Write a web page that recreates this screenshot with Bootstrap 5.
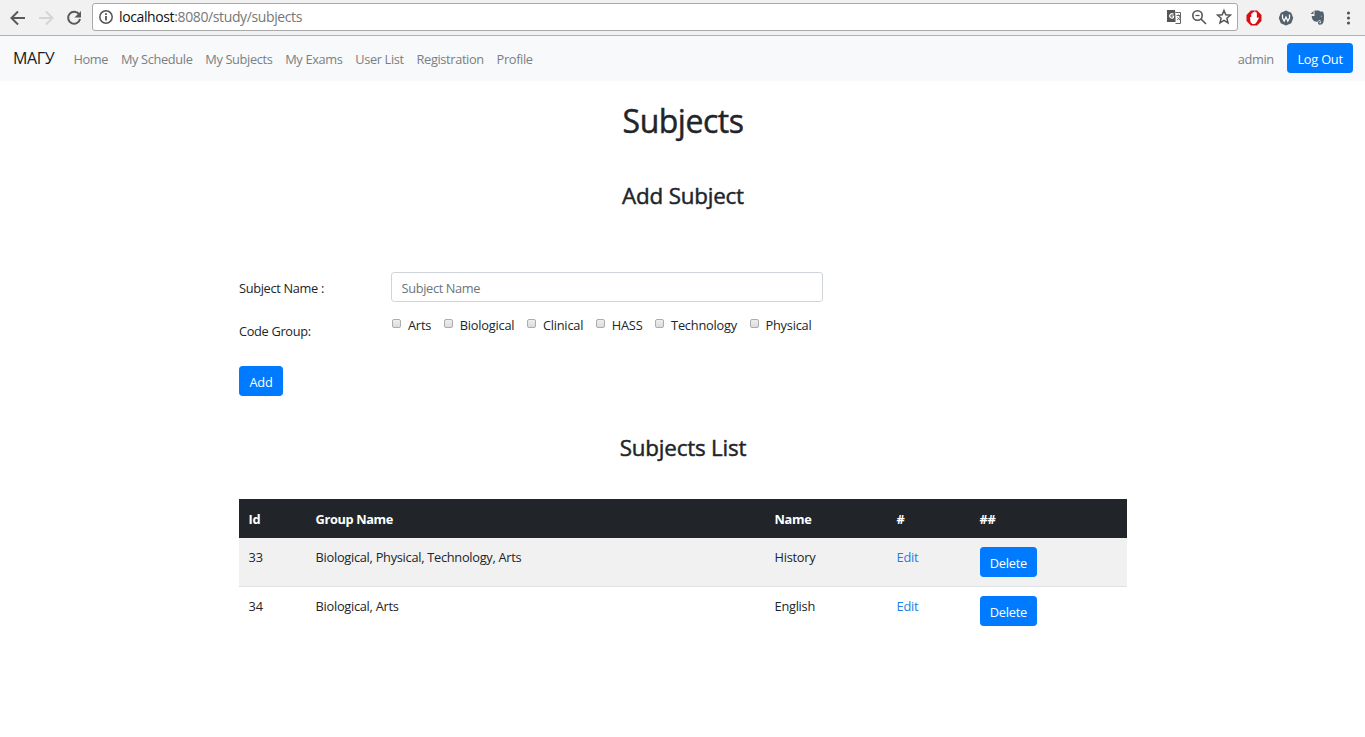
<!DOCTYPE html>
<html lang="en">
<head>
<meta charset="utf-8">
<meta name="viewport" content="width=device-width, initial-scale=1">
<title>Subjects</title>
<link rel="stylesheet" href="https://cdn.jsdelivr.net/npm/bootstrap@5.3.0/dist/css/bootstrap.min.css">
<style>
:root{font-size:12.8px}
body{font-family:"Open Sans","Noto Sans",sans-serif;font-size:12.8px;line-height:19.2px;color:#212529;letter-spacing:-.33px;background:#fff;overflow:hidden}
.browser-bar{height:36px;background:#f1f1f1;border-bottom:1px solid #b3b3b3}
.browser-bar svg{flex:none;display:block}
.address{width:1146px;height:28px;margin:0 7px 2px 10px;background:#fff;border:1px solid #a9a9a9;border-radius:3px;font-size:14px;letter-spacing:-.38px;color:#777;padding:0 4px 0 5px}
.address .url{margin-left:5px;padding-top:1px}
.address b{font-weight:400;color:#111}
.site-nav{height:45px;background:#f7f9fb;padding:0 12px 0 13px}
.site-nav .navbar-brand{font-size:16px;padding:0;margin:0 6px 0 0;width:48px;color:#1b1b1b;letter-spacing:-.35px}
.site-nav .nav-link{padding:2px 6.4px 0;color:#7c7f81;letter-spacing:-.36px}
.site-nav .btn{margin:0 0 2px 7px}
.btn-primary{--bs-btn-bg:#007bff;--bs-btn-border-color:#007bff;--bs-btn-border-radius:3.2px;--bs-btn-padding-x:9.200px;--bs-btn-font-size:12.8px;padding-top:5.400px;padding-bottom:3.400px;height:30px;line-height:21px;letter-spacing:-.23px}
h1,h3{font-weight:500;-webkit-text-stroke:.45px #212529}
h1{font-size:32px;line-height:38px;margin:21px 0 0;letter-spacing:-.5px;padding-left:1px}
h3{font-size:22.4px;line-height:27px;letter-spacing:-.2px;padding-left:1px}
.add-title{margin:42px 0 0}
.list-title{margin:38px 0}
.page-body{width:888px;margin:0 auto 0 239px}
.add-form{padding-top:63px}
.add-form .btn{min-width:44px}
.form-label-col{width:152px;padding-top:7px}
.group-row{height:64px;padding-top:14px}
.group-row .form-label-col{padding-top:6px}
.form-control{width:432px;height:30px;border-color:#ced4da;border-radius:3.2px;padding:2px 9.6px 0;font-size:12.8px;letter-spacing:-.36px}
.form-control::placeholder{color:#6c757d}
.checks{gap:12.600px;padding-left:1px;letter-spacing:-.22px}
.group-check{appearance:none;width:9px;height:9px;margin:0 7px 4px 0;border:1px solid #acacac;border-radius:2px;background:linear-gradient(#eee,#dcdcdc)}
.subject-table{table-layout:fixed;width:888px;margin:0;color:#212529;letter-spacing:-.28px}
.subject-table>:not(caption)>*>*{padding:9.6px;border:0;vertical-align:top}
.subject-table>thead>tr>th{background:#212529;color:#fff;height:39px;font-weight:700;padding-top:11px;padding-bottom:8px;letter-spacing:-.38px}
.subject-table>tbody>tr>td{height:49px;padding-top:10px;padding-bottom:0}
.subject-table>tbody>tr>td.act{padding-top:9px}
.subject-table tbody tr:first-child td{background:#f1f1f2;box-shadow:inset 0 -1px #dee2e6}
.subject-table a{color:#1a7ee6;text-decoration:none}
</style>
</head>
<body>
<div class="browser-bar d-flex align-items-center">
  <svg width="82" height="34" viewBox="0 0 82 34" fill="none" stroke="#5a5a5a" stroke-width="2">
    <path d="M25 17H12M18 10.5 11.500 17 18 23.500"/>
    <path stroke="#d5d5d5" d="M39 17h13M46 10.500 52.500 17 46 23.500"/>
    <path d="M79 13.200A6 6 0 1 0 80 18"/><path fill="#5a5a5a" stroke="none" d="M81 10v6.500h-6.500z"/>
  </svg>
  <div class="address d-flex align-items-center">
    <svg width="16" height="16" viewBox="0 0 16 16" fill="none" stroke="#555" stroke-width="1.500"><circle cx="8" cy="8" r="6.200"/><path stroke-width="1.800" d="M8 7v4.500M8 4.300v1.800"/></svg>
    <span class="url me-auto"><b>localhost</b>:8080/study/subjects</span>
    <svg width="66" height="18" viewBox="0 0 66 18">
      <path fill="#555" d="M0 2h8l1.500 12H0z"/><path fill="#fff" stroke="#666" d="M8.500 4.500h5v11h-5"/>
      <path fill="none" stroke="#fff" stroke-width="1.200" d="M6.500 6.300A2.200 2.200 0 1 0 6.500 9.500V8h-2"/>
      <path fill="none" stroke="#666" d="M9.500 7.500h4M11.500 6.500v1M13 8c-.5 2-2 3.500-3 4M10.500 9.500l3 3"/>
      <g fill="none" stroke="#555" stroke-width="1.600"><circle cx="30.500" cy="7.500" r="4.700"/><path d="m34 11 5 5"/><path stroke-width="1.200" d="M28.500 7.500h4"/></g>
      <path fill="none" stroke="#555" stroke-width="1.500" d="m57 2.500 1.800 4.300 4.600.4-3.500 3 1.100 4.600-4-2.500-4 2.500 1.100-4.600-3.500-3 4.600-.4z"/>
    </svg>
  </div>
  <svg width="120" height="34" viewBox="0 0 120 34">
    <path fill="#d90d10" d="M5.900 9.500h6.200l4.400 4.400v6.200l-4.400 4.400H5.900l-4.400-4.400v-6.200z"/>
    <path fill="#fff" d="M5 16h1.300v-3.500h1.300v-1.300h1.500v-.7h1.500v1h1.300v5.500l1.500-.8.500.8-2.500 4.500-1.500 1.500H7.300L5.500 21z"/>
    <path fill="#53616c" d="m41 9.500 5.200 2.300 2 5.200-2 5.200-5.200 2.300-5.200-2.300-2-5.200 2-5.200z"/>
    <path fill="none" stroke="#fff" stroke-width="1.300" d="M37.500 13.500v3.500l1.700 3L41 16l1.800 4 1.700-3v-3.500"/>
    <g transform="translate(-.5 -.5)"><path fill="#53616c" d="M70 10h4.500l1 1H78q1.300.5 1.500 4 .1 4.500-.7 7-.8 2.500-4 2.300-1.500-.5-1.300-2.500.4-1.500 2.500-1.500v1.300q-1.300-.2-1.300 1 1.700.8 2-1.300.2-1.600-2.200-1.800l-.6 1.300q-2 1-4.400-.3-2-1-2.300-5h2.800z"/><path fill="#53616c" d="M69 10.500v3h-3z"/><path fill="#eee" d="M76 15.500q1.500-.7 1.600.8z"/></g>
    <g fill="#555"><circle cx="103.500" cy="12" r="1.600"/><circle cx="103.500" cy="17" r="1.600"/><circle cx="103.500" cy="22" r="1.600"/></g>
  </svg>
</div>
<nav class="site-nav navbar navbar-expand flex-nowrap">
  <a class="navbar-brand" href="#">МАГУ</a>
  <div class="navbar-nav me-auto">
    <a class="nav-link" href="#">Home</a><a class="nav-link" href="#">My Schedule</a><a class="nav-link" href="#">My Subjects</a><a class="nav-link" href="#">My Exams</a><a class="nav-link" href="#">User List</a><a class="nav-link" href="#">Registration</a><a class="nav-link" href="#">Profile</a>
  </div>
  <div class="navbar-nav align-items-center"><a class="nav-link" href="#">admin</a><button class="btn btn-primary">Log Out</button></div>
</nav>
<main>
  <h1 class="text-center">Subjects</h1>
  <h3 class="text-center add-title">Add Subject</h3>
  <div class="page-body">
    <form class="add-form">
      <div class="d-flex"><label class="form-label-col">Subject Name :</label><input class="form-control" placeholder="Subject Name"></div>
      <div class="d-flex align-items-start group-row">
        <div class="form-label-col">Code Group:</div>
        <div class="d-flex checks">
          <label class="d-flex align-items-center"><input class="group-check" type="checkbox">Arts</label>
          <label class="d-flex align-items-center"><input class="group-check" type="checkbox">Biological</label>
          <label class="d-flex align-items-center"><input class="group-check" type="checkbox">Clinical</label>
          <label class="d-flex align-items-center"><input class="group-check" type="checkbox">HASS</label>
          <label class="d-flex align-items-center"><input class="group-check" type="checkbox">Technology</label>
          <label class="d-flex align-items-center"><input class="group-check" type="checkbox">Physical</label>
        </div>
      </div>
      <button class="btn btn-primary" type="button">Add</button>
    </form>
  </div>
  <h3 class="text-center list-title">Subjects List</h3>
  <div class="page-body">
    <table class="table subject-table">
      <colgroup><col style="width:67px"><col style="width:459px"><col style="width:122px"><col style="width:83px"><col style="width:157px"></colgroup>
      <thead><tr><th>Id</th><th>Group Name</th><th>Name</th><th>#</th><th>##</th></tr></thead>
      <tbody>
        <tr><td>33</td><td>Biological, Physical, Technology, Arts</td><td>History</td><td><a href="#">Edit</a></td><td class="act"><button class="btn btn-primary">Delete</button></td></tr>
        <tr><td>34</td><td>Biological, Arts</td><td>English</td><td><a href="#">Edit</a></td><td class="act"><button class="btn btn-primary">Delete</button></td></tr>
      </tbody>
    </table>
  </div>
</main>
<script src="https://cdn.jsdelivr.net/npm/bootstrap@5.3.0/dist/js/bootstrap.bundle.min.js"></script>
</body>
</html>
